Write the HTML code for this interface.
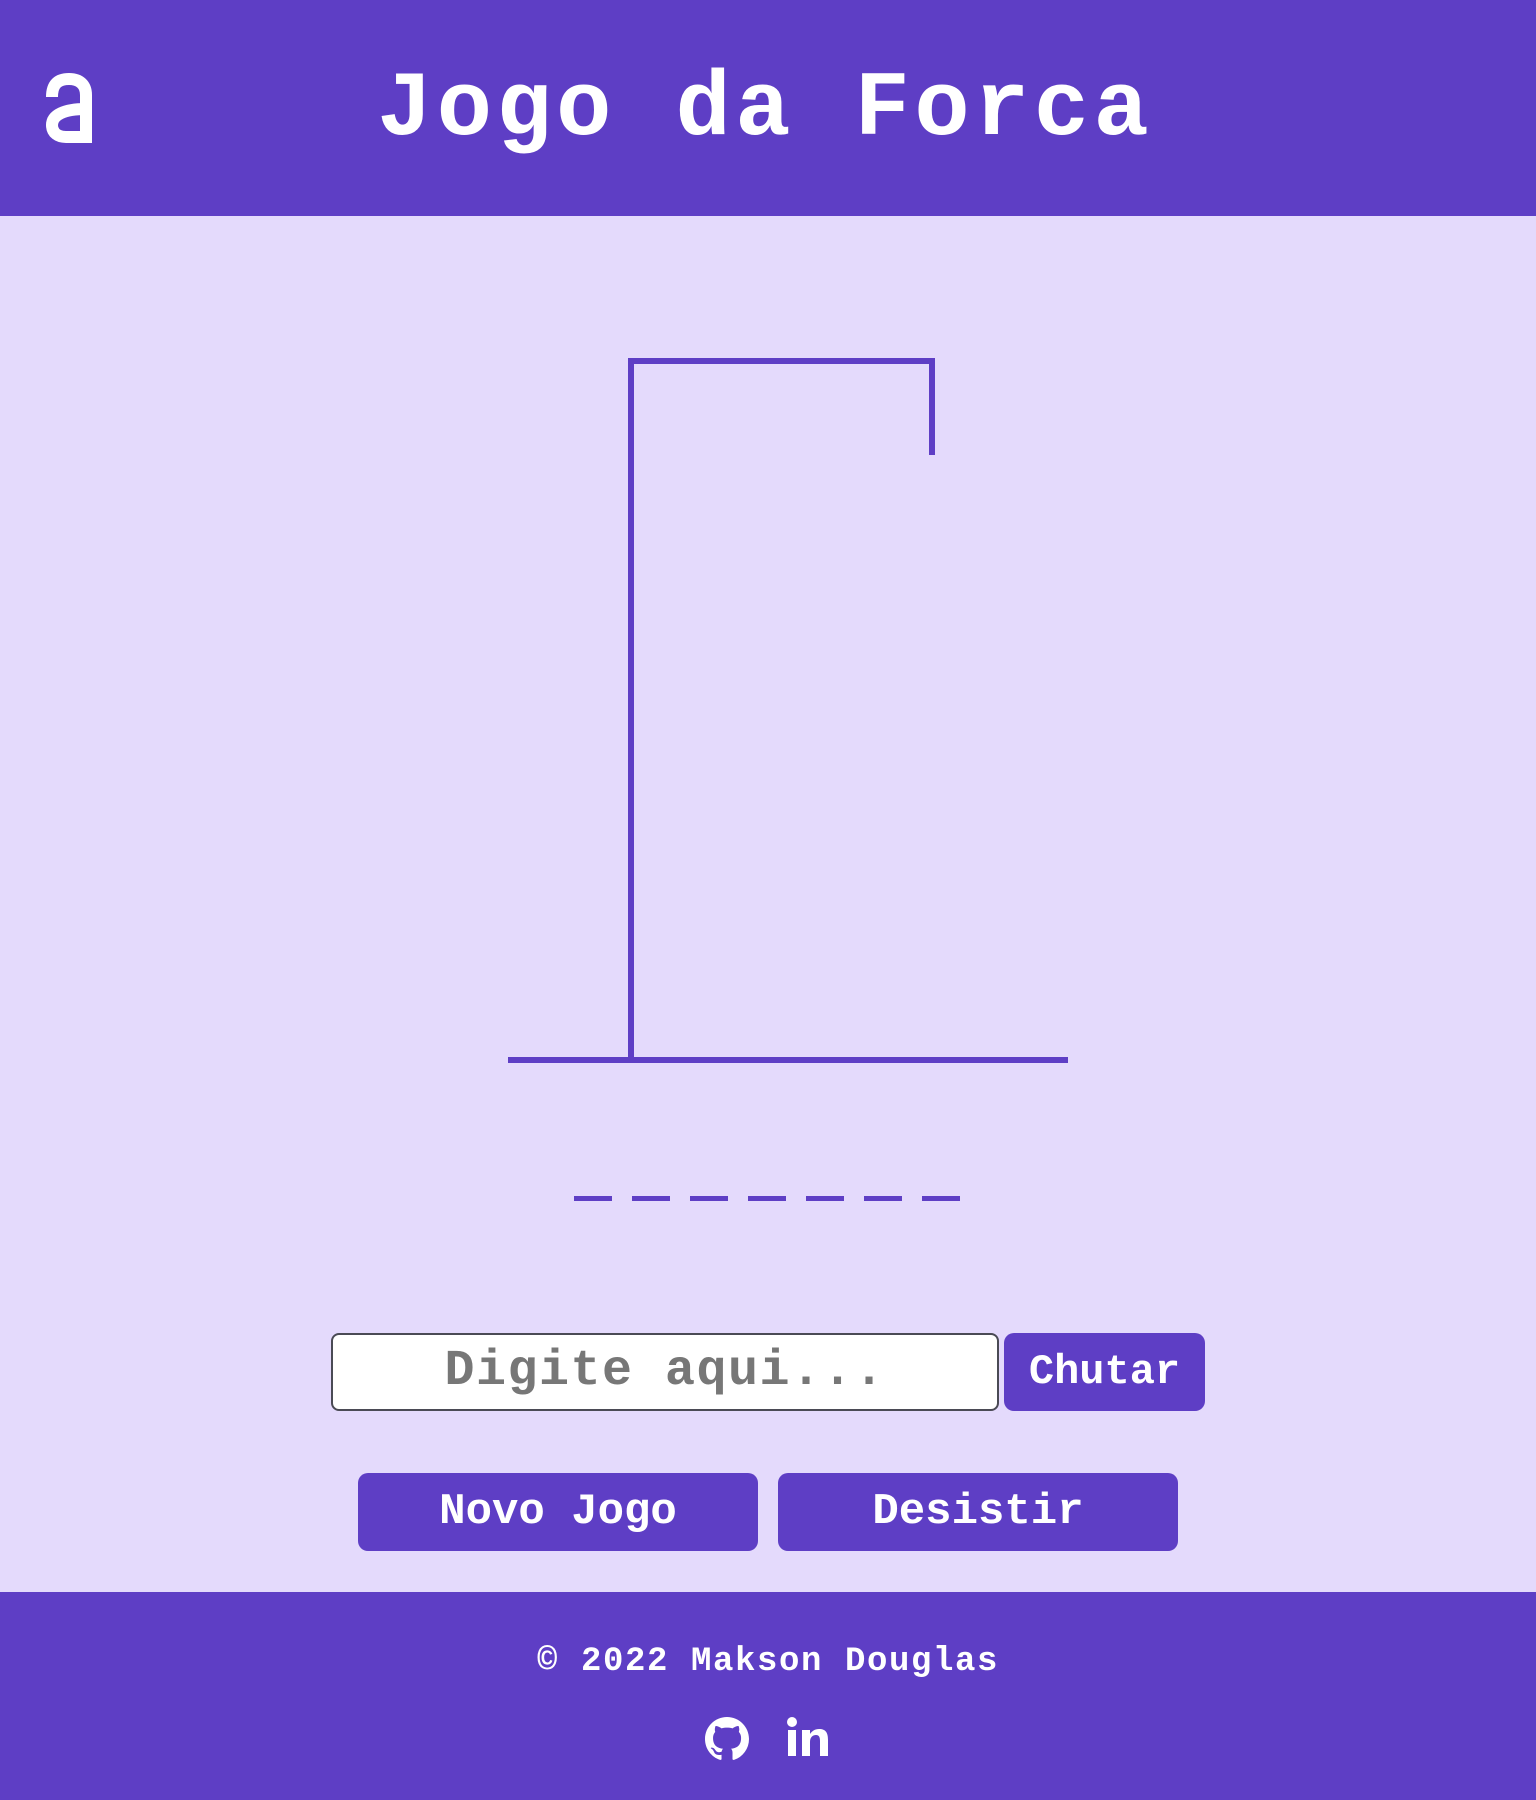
<!DOCTYPE html>
<html><head><meta charset="utf-8"><style>
*{margin:0;padding:0;box-sizing:border-box}
html,body{width:1536px;height:1800px;overflow:hidden;background:#e4dafc;font-family:"Liberation Mono",monospace;font-weight:bold}
header{position:absolute;left:0;top:0;width:1536px;height:216px;background:#5e3ec5}
h1{position:absolute;left:377px;top:64px;width:800px;color:#fff;font-size:92px;line-height:92px;white-space:nowrap;letter-spacing:4.5px}
svg.g{position:absolute;left:0;top:0}
.inp{position:absolute;left:331px;top:1333px;width:668px;height:78px;background:#fff;border:2px solid #4a4a55;border-radius:8px;color:#777;font-size:50px;line-height:74px;text-align:center;white-space:nowrap;letter-spacing:1.5px}
.btn{position:absolute;background:#5e3ec5;border-radius:10px;color:#fff;text-align:center;white-space:nowrap}
footer{position:absolute;left:0;top:1592px;width:1536px;height:208px;background:#5e3ec5;color:#fff}
.copy{position:absolute;left:0;width:1536px;top:1642px;text-align:center;font-size:34px;line-height:40px;color:#fff;white-space:nowrap;letter-spacing:1.6px}
</style></head><body>
<header>
<svg style="position:absolute;left:46px;top:73px" width="46" height="70" viewBox="0 0 46 70"><g fill="none" stroke="#fff" stroke-width="12"><path d="M6,24 C6,11 12,6 23,6 C34,6 40,12 40,22 V70"/><path d="M40,36 C18,36 6,42 6,52 C6,60 12,64 20,64 H40"/></g></svg>
<h1>Jogo da Forca</h1></header>
<svg class="g" width="1536" height="1300">
<g stroke="#5e3ec5" stroke-width="6" fill="none">
<polyline points="631,1060 631,361 932,361 932,455"/>
<line x1="508" y1="1060" x2="1068" y2="1060"/>
</g>
<g fill="#5e3ec5">
<rect x="574" y="1196" width="38" height="5"/>
<rect x="632" y="1196" width="38" height="5"/>
<rect x="690" y="1196" width="38" height="5"/>
<rect x="748" y="1196" width="38" height="5"/>
<rect x="806" y="1196" width="38" height="5"/>
<rect x="864" y="1196" width="38" height="5"/>
<rect x="922" y="1196" width="38" height="5"/>
</g>
</svg>
<div class="inp">Digite aqui...</div>
<div class="btn" style="left:1004px;top:1333px;width:201px;height:78px;font-size:42px;line-height:78px">Chutar</div>
<div class="btn" style="left:358px;top:1473px;width:400px;height:78px;font-size:44px;line-height:78px">Novo Jogo</div>
<div class="btn" style="left:778px;top:1473px;width:400px;height:78px;font-size:44px;line-height:78px">Desistir</div>
<footer></footer>
<div class="copy">© 2022 Makson Douglas</div>
<svg style="position:absolute;left:705px;top:1717px" width="44" height="44" viewBox="0 0 16 16"><path fill="#fff" d="M8 0C3.580 0 0 3.580 0 8c0 3.540 2.290 6.530 5.470 7.590.4.070.550-.170.550-.380 0-.190-.010-.820-.010-1.490-2.010.370-2.530-.490-2.690-.940-.090-.230-.480-.940-.820-1.130-.280-.150-.680-.520-.010-.530.630-.010 1.080.580 1.230.820.720 1.210 1.870.870 2.330.660.070-.520.280-.870.510-1.070-1.780-.2-3.640-.890-3.640-3.950 0-.870.310-1.590.820-2.150-.080-.2-.360-1.020.080-2.120 0 0 .670-.210 2.200.820.640-.180 1.320-.270 2-.270.680 0 1.360.090 2 .270 1.530-1.040 2.200-.820 2.200-.820.440 1.100.160 1.920.080 2.120.510.560.820 1.270.820 2.150 0 3.070-1.870 3.750-3.650 3.950.290.250.540.730.540 1.480 0 1.070-.010 1.930-.010 2.200 0 .210.150.460.550.380A8.013 8.013 0 0016 8c0-4.420-3.580-8-8-8z"/></svg>
<svg style="position:absolute;left:787px;top:1717px" width="48" height="40" viewBox="0 0 48 40"><circle cx="5" cy="5" r="5" fill="#fff"/><rect x="1" y="13" width="8" height="26" fill="#fff"/><path fill="#fff" d="M15 13h8v4c2-3 5-5 9-5 7 0 9 4 9 11v16h-8V24c0-4-1-6-4-6s-6 2-6 7v14h-8z"/></svg>
</body></html>
